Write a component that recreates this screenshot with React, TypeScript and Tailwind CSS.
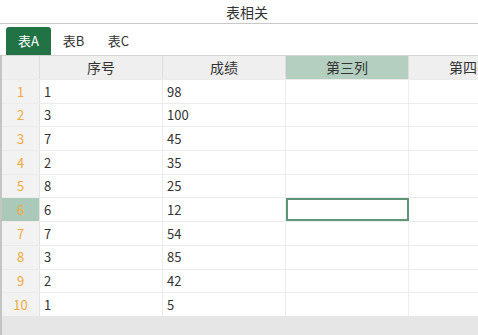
const rows: [number, number][] = [
  [1, 98],
  [3, 100],
  [7, 45],
  [2, 35],
  [8, 25],
  [6, 12],
  [7, 54],
  [3, 85],
  [2, 42],
  [1, 5],
];

const headers = ["序号", "成绩", "第三列", "第四列"];

export default function App() {
  const font = { fontFamily: '"Noto Sans CJK SC", "Liberation Sans", sans-serif' };
  return (
    <div className="w-[478px] h-[335px] overflow-hidden bg-white text-[#333]" style={font}>
      <div className="h-[24px] border-b border-[#c8c8c8] flex items-center justify-center text-[14px] pl-[16px] pt-[1px]">
        表相关
      </div>
      <div className="h-[31px] flex items-end pl-[6px] text-[13px]">
        <div className="h-[28px] w-[45px] bg-[#217346] text-white rounded-t-[3px] flex items-center justify-center">
          表A
        </div>
        <div className="h-[28px] w-[45px] flex items-center justify-center">表B</div>
        <div className="h-[28px] w-[45px] flex items-center justify-center">表C</div>
      </div>
      <div className="border-l-2 border-[#c4c4c4] bg-[#e6e6e6] h-[280px]">
        <div className="flex h-[24px] border-t border-[#d4d4d4] bg-[#efefef] text-[14px]">
          <div className="w-[38px] shrink-0 border-r border-[#dedede]" />
          {headers.map((h, i) => (
            <div
              key={h}
              className={`w-[123px] shrink-0 border-r border-[#dedede] flex items-center justify-center whitespace-nowrap ${
                i === 2 ? "bg-[#b4cfc0]" : ""
              }`}
            >
              {h}
            </div>
          ))}
        </div>
        {rows.map(([a, b], r) => (
          <div key={r} className="flex h-[23.7px] border-t border-[#ececec] bg-white text-[13px]">
            <div
              className={`w-[38px] shrink-0 border-r border-[#e2e2e2] flex items-center justify-center text-[#f2a93b] ${
                r === 5 ? "bg-[#abc9b9]" : "bg-[#f2f2f2]"
              }`}
            >
              {r + 1}
            </div>
            <div className="w-[123px] shrink-0 border-r border-[#ececec] flex items-center pl-[4px]">{a}</div>
            <div className="w-[123px] shrink-0 border-r border-[#ececec] flex items-center pl-[4px]">{b}</div>
            <div
              className={
                r === 5
                  ? "w-[123px] shrink-0 border-2 border-[#5e9677]"
                  : "w-[123px] shrink-0 border-r border-[#ececec]"
              }
            />
            <div className="w-[123px] shrink-0 border-r border-[#ececec]" />
          </div>
        ))}
      </div>
    </div>
  );
}
